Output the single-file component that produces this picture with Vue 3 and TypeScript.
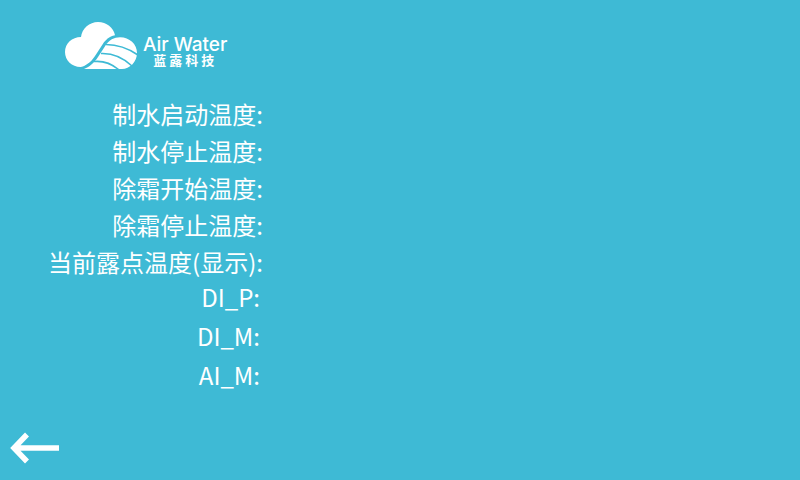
<script setup lang="ts">
const temperatures: string[] = [
  '制水启动温度:',
  '制水停止温度:',
  '除霜开始温度:',
  '除霜停止温度:',
  '当前露点温度(显示):',
]

const registers: string[] = ['DI_P:', 'DI_M:', 'AI_M:']
</script>

<template>
  <main class="screen">
    <header class="brand">
      <svg class="cloud" viewBox="0 0 74 48" aria-hidden="true">
        <path
          fill="#fff"
          d="M15.500 46C7 46 0 39.500 0 31C0 22.500 7 16 16 16C17 7.500 24.500 1 33 1C41.500 1 48.500 6.500 50 14.300C44 15.500 40.500 19 37.500 23.500L31 33.500C27 40 23 43.500 17 45.800Z"
        />
        <path
          fill="#fff"
          d="M19 48C25 45.500 29 42 33 36L40.500 24.500C44 19 49 16.200 55 16.200C64.500 16.200 72 23 72 32C72 41 64.500 48 57 48Z"
        />
        <g class="stripes">
          <path d="M41 23.500C52 23.500 62 26.500 73 34" />
          <path d="M36 32.500C48 32 57 35.500 67 45" />
          <path d="M29 40.500C39 39.500 46 42 54 49" />
        </g>
      </svg>
      <div class="wordmark">
        <span class="latin">Air Water</span>
        <span class="chinese">蓝露科技</span>
      </div>
    </header>

    <section class="settings">
      <ul class="labels temperatures">
        <li v-for="label in temperatures" :key="label">{{ label }}</li>
      </ul>
      <ul class="labels registers">
        <li v-for="label in registers" :key="label">{{ label }}</li>
      </ul>
    </section>

    <footer class="footer">
      <button class="back" type="button" aria-label="返回">
        <svg viewBox="0 0 50 32" aria-hidden="true">
          <path d="M17 2.500L4 16L17 29.500M4 16H49" fill="none" stroke="#fff" stroke-width="5.500" />
        </svg>
      </button>
    </footer>
  </main>
</template>

<style>
body {
  margin: 0;
  background: #3ebad5;
}
</style>

<style scoped>
.screen {
  box-sizing: border-box;
  display: flex;
  flex-direction: column;
  min-height: 100vh;
  padding: 21px 10px 16px;
  background: #3ebad5;
  color: #fff;
  font-family: "Noto Sans CJK SC", sans-serif;
}

.brand {
  display: flex;
  padding-left: 55px;
}

.cloud {
  width: 74px;
  height: 48px;
}

.stripes {
  fill: none;
  stroke: #3ebad5;
  stroke-width: 1.6;
}

.wordmark {
  display: flex;
  flex-direction: column;
  align-items: center;
  padding: 14px 0 0 4px;
}

.latin {
  font-family: Inter, sans-serif;
  font-size: 19px;
  font-weight: 500;
  line-height: 19px;
}

.chinese {
  font-size: 13px;
  font-weight: 700;
  line-height: 12px;
  letter-spacing: 3px;
}

.settings {
  display: flex;
  flex-direction: column;
  align-items: flex-start;
  padding-top: 26px;
}

.labels {
  box-sizing: border-box;
  width: 253px;
  margin: 0;
  padding: 0;
  list-style: none;
  text-align: right;
  font-size: 24px;
  font-weight: 400;
  white-space: nowrap;
}

.temperatures li {
  line-height: 37px;
}

.registers {
  display: flex;
  flex-direction: column;
  gap: 6px;
  padding-right: 3px;
}

.registers li {
  line-height: 33px;
}

.footer {
  display: flex;
  margin-top: auto;
}

.back {
  display: flex;
  padding: 0;
  border: 0;
  background: none;
  cursor: pointer;
}

.back svg {
  width: 50px;
  height: 32px;
}
</style>
